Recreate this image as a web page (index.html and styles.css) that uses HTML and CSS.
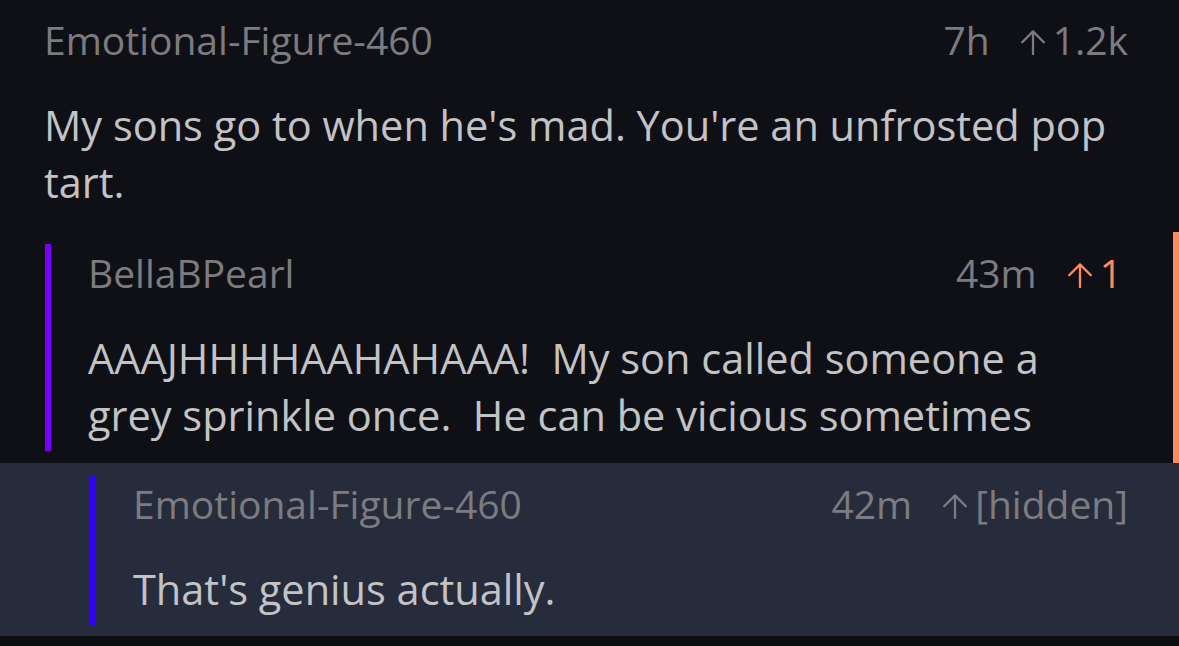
FILE: index.html
```html
<!DOCTYPE html>
<html>
<head>
<meta charset="utf-8">
<link rel="stylesheet" href="styles.css">
</head>
<body>
<div class="thread">
  <div class="comment top">
    <div class="head">
      <span class="user">Emotional-Figure-460</span>
      <span class="meta"><span class="time">7h</span><span class="vote"><svg class="arrow" viewBox="0 0 24 25"><path d="M12 24V1.4M1.2 12.2L12 1.4L22.8 12.2"/></svg><span>1.2k</span></span></span>
    </div>
    <p class="body">My sons go to when he's mad. You're an unfrosted pop tart.</p>
  </div>
  <div class="reply-wrap">
    <div class="reply purple">
      <div class="head">
        <span class="user">BellaBPearl</span>
        <span class="meta"><span class="time">43m</span><span class="vote up"><svg class="arrow" viewBox="0 0 24 25"><path d="M12 24V1.4M1.2 12.2L12 1.4L22.8 12.2"/></svg><span>1</span></span></span>
      </div>
      <p class="body">AAAJHHHHAAHAHAAA!&nbsp; My son called someone a grey sprinkle once.&nbsp; He can be vicious sometimes</p>
    </div>
  </div>
  <div class="highlight">
    <div class="reply blue">
      <div class="head">
        <span class="user">Emotional-Figure-460</span>
        <span class="meta"><span class="time">42m</span><span class="vote"><svg class="arrow" viewBox="0 0 24 25"><path d="M12 24V1.4M1.2 12.2L12 1.4L22.8 12.2"/></svg><span>[hidden]</span></span></span>
      </div>
      <p class="body">That's genius actually.</p>
    </div>
  </div>
</div>
</body>
</html>
```
FILE: styles.css
```css
html, body {
  margin: 0;
  padding: 0;
  background: #0c0d11;
}
body {
  font-family: "Open Sans", "Noto Sans", sans-serif;
  color: #c3c3c5;
}
.thread {
  background: #0f1016;
}
.head {
  display: flex;
  justify-content: space-between;
  align-items: baseline;
  font-size: 39px;
  line-height: 57px;
  color: #7c7c80;
}
.meta {
  display: flex;
  align-items: baseline;
  gap: 31px;
}
.vote {
  display: flex;
  align-items: baseline;
  gap: 8px;
}
.arrow {
  width: 24px;
  height: 25px;
  fill: none;
  stroke: currentColor;
  stroke-width: 2.3;
  stroke-linecap: round;
  stroke-linejoin: round;
}
.vote.up {
  color: #ff8b5b;
}
.body {
  margin: 29px 0 0;
  font-size: 41.5px;
  line-height: 57px;
}
.comment.top {
  padding: 11px 51px 21px 44px;
}
.reply-wrap {
  padding: 12px 51px 12px 45px;
  border-right: 6px solid #ff8b5b;
}
.reply {
  padding: 0 0 7px 37px;
  border-left: 6px solid #7800ff;
}
.highlight {
  background: #262c3c;
  padding: 12px 51px 11px 89px;
}
.reply.blue {
  border-left-color: #2f00ff;
  padding: 0 0 7px 38px;
}
```
